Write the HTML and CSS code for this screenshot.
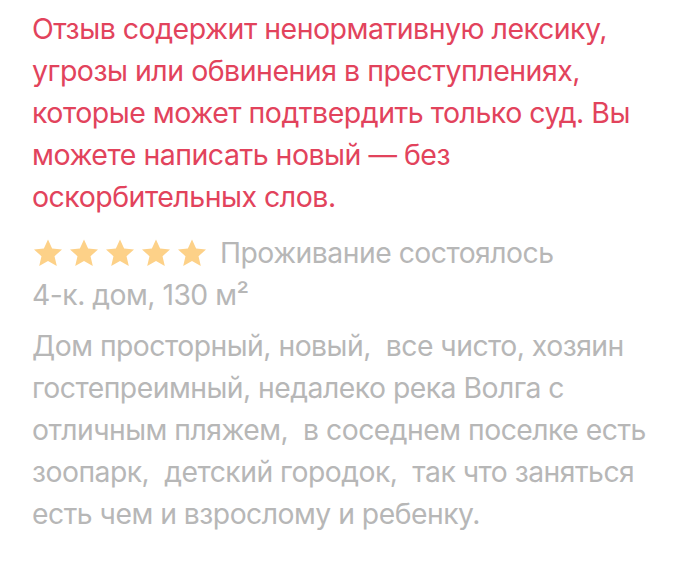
FILE: index.html
```html
<!DOCTYPE html>
<html lang="ru">
  <head>
    <meta charset="UTF-8" />
    <meta name="viewport" content="width=device-width, initial-scale=1.0" />
    <title>Отзыв</title>
    <link rel="stylesheet" href="styles.css">
  </head>
  <body>
    <div class="review">
      <p class="warning">
        Отзыв содержит ненормативную лексику,<br />
        угрозы или обвинения в преступлениях,<br />
        которые может подтвердить только суд. Вы<br />
        можете написать новый — без<br />
        оскорбительных слов.
      </p>

      <div class="rating-row">
        <div class="stars">
          <svg viewBox="0 0 24 24"><path d="M12 1.8l3.1 6.9 7.4.7-5.6 5 1.7 7.4L12 18l-6.6 3.8 1.7-7.4-5.6-5 7.4-.7z" /></svg>
          <svg viewBox="0 0 24 24"><path d="M12 1.8l3.1 6.9 7.4.7-5.6 5 1.7 7.4L12 18l-6.6 3.8 1.7-7.4-5.6-5 7.4-.7z" /></svg>
          <svg viewBox="0 0 24 24"><path d="M12 1.8l3.1 6.9 7.4.7-5.6 5 1.7 7.4L12 18l-6.6 3.8 1.7-7.4-5.6-5 7.4-.7z" /></svg>
          <svg viewBox="0 0 24 24"><path d="M12 1.8l3.1 6.9 7.4.7-5.6 5 1.7 7.4L12 18l-6.6 3.8 1.7-7.4-5.6-5 7.4-.7z" /></svg>
          <svg viewBox="0 0 24 24"><path d="M12 1.8l3.1 6.9 7.4.7-5.6 5 1.7 7.4L12 18l-6.6 3.8 1.7-7.4-5.6-5 7.4-.7z" /></svg>
        </div>
        <span class="status">Проживание состоялось</span>
      </div>

      <div class="object">4-к. дом, 130 м²</div>

      <p class="text">
        Дом просторный, новый,&nbsp; все чисто, хозяин<br />
        гостепреимный, недалеко река Волга с<br />
        отличным пляжем,&nbsp; в соседнем поселке есть<br />
        зоопарк,&nbsp; детский городок,&nbsp; так что заняться<br />
        есть чем и взрослому и ребенку.
      </p>
    </div>
  </body>
</html>
```

FILE: styles.css
```css
body {
  margin: 0;
  background-color: #fff;
  font-family: Inter, "Noto Sans", sans-serif;
}
.review {
  padding: 8px 0 0 32px;
  white-space: nowrap;
}
.warning {
  margin: 0;
  font-size: 28.5px;
  line-height: 42px;
  letter-spacing: -0.5px;
  color: #e2435c;
}
.rating-row {
  display: flex;
  align-items: center;
  gap: 12px;
  margin-top: 14px;
  height: 42px;
}
.stars {
  display: flex;
  gap: 4px;
}
.stars svg {
  width: 32px;
  height: 32px;
  fill: #fdd188;
}
.status,
.object,
.text {
  font-size: 28.3px;
  color: #b7b7b7;
  letter-spacing: -0.5px;
}
.object {
  line-height: 42px;
}
.text {
  margin: 9px 0 0;
  line-height: 42px;
}
```
